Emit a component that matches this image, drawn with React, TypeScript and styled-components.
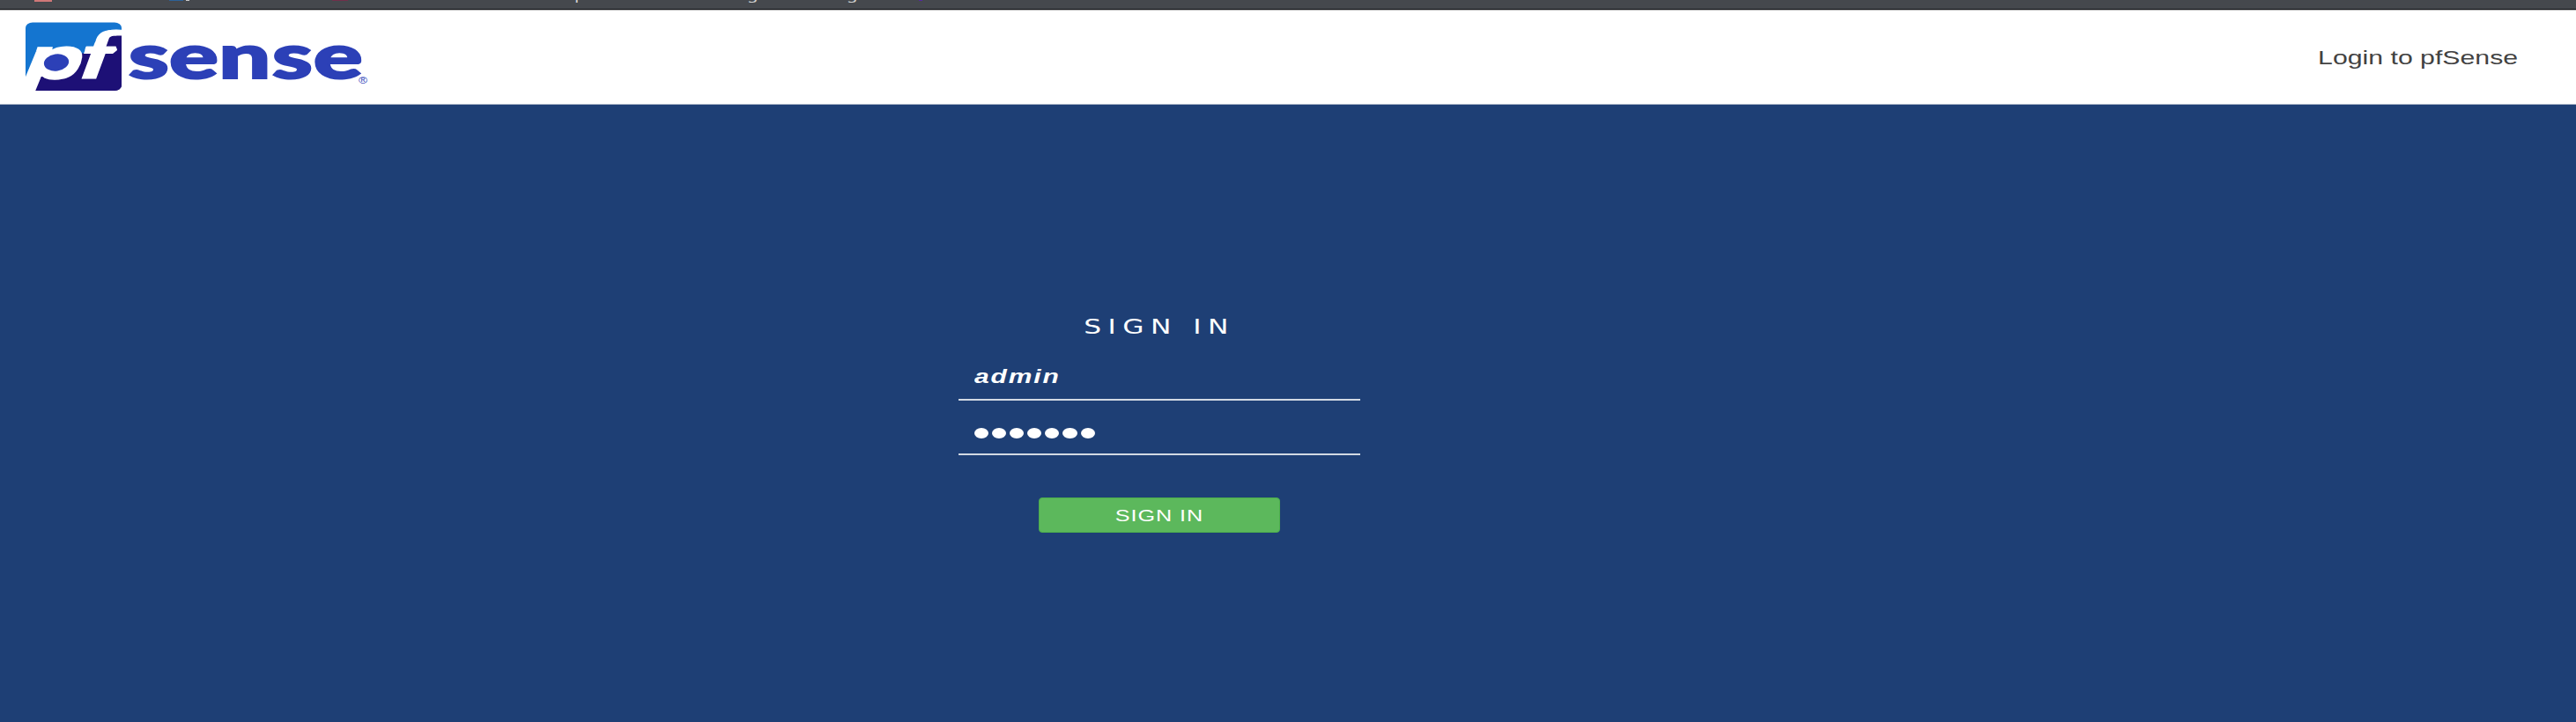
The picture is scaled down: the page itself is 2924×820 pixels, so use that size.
import React from "react";
import styled, { createGlobalStyle } from "styled-components";

const Global = createGlobalStyle`
  html, body { margin: 0; padding: 0; }
  body { background: #1e3f75; font-family: "Liberation Sans", Arial, sans-serif; overflow: hidden; }
  * { box-sizing: border-box; }
`;

const Page = styled.div`
  display: flex;
  flex-direction: column;
  height: 820px;
  background: #1e3f75;
`;

const BookmarkStrip = styled.svg`
  display: block;
  flex: none;
  width: 100%;
  height: 12px;
  background: #45484d;
  border-bottom: 1px solid #b4b4b5;
`;

const Header = styled.header`
  display: flex;
  flex: none;
  justify-content: space-between;
  height: 107px;
  padding: 0 66px 0 29px;
  background: #fff;
  border-bottom: 1px solid #a3afc3;
`;

const Logo = styled.svg`
  display: block;
  margin-top: 12px;
  width: 392px;
  height: 84px;
  overflow: visible;
`;

const WideText = styled.span<{ $origin?: string; $scale?: number }>`
  display: inline-block;
  white-space: nowrap;
  transform: scaleX(${(p) => p.$scale ?? 1.36});
  transform-origin: ${(p) => p.$origin ?? "center"} center;
`;

const LoginTitle = styled.div`
  margin-top: 41px;
  font-size: 22px;
  line-height: 25px;
  color: #424242;
`;

const Form = styled.form`
  display: flex;
  flex-direction: column;
  align-items: center;
  width: 456px;
  margin: 234px 0 0 1088px;
  color: #fff;
`;

const Heading = styled.h1`
  margin: 0;
  font-family: "DejaVu Sans", sans-serif;
  font-size: 23px;
  font-weight: 400;
  line-height: 36px;
  letter-spacing: 5.5px;
`;

const Field = styled.div<{ $height: number }>`
  display: flex;
  align-items: center;
  width: 100%;
  height: ${(p) => p.$height}px;
  padding: 14px 18px 0;
  border-bottom: 2px solid #d2d9e3;
`;

const UserName = styled.span`
  font-size: 22px;
  font-weight: 700;
  font-style: italic;
  letter-spacing: 1.4px;
`;

const Dots = styled.div`
  display: flex;
  gap: 4px;
`;

const Dot = styled.i`
  width: 16.1px;
  height: 12px;
  border-radius: 50%;
  background: #fff;
`;

const SubmitButton = styled.button`
  width: 274px;
  height: 40px;
  margin: 48px 0 0;
  padding: 1px 0 0;
  border: 1px solid #4cae4c;
  border-radius: 4px;
  background: #5cb85c;
  color: #fff;
  font-family: inherit;
  font-size: 18.5px;
  letter-spacing: 0.7px;
`;

function PfSenseLogo() {
  return (
    <Logo viewBox="29 24 392 84" role="img" aria-label="pfSense">
      <clipPath id="badge">
        <rect x="29" y="25.5" width="109" height="77.5" rx="8" ry="6" />
      </clipPath>
      <g clipPath="url(#badge)">
        <path d="M29 25H138V60L60 88H29Z" fill="#1475d0" />
        <path d="M39.7 103L46 85.5L64 85L84 78L92 61L115 56L128 38H138V103Z" fill="#1d1076" />
        <g fill="#fff" stroke="#fff" fontFamily="'Liberation Sans', Arial, sans-serif" fontWeight="700" fontStyle="italic">
          <text transform="translate(28 89) skewX(-6) scale(1.6 1)" fontSize="66" strokeWidth="2">p</text>
          <text transform="translate(89.5 88.5) skewX(-5) scale(1.45 1)" fontSize="76" strokeWidth="1">f</text>
        </g>
        <path d="M94 46H108.5L106 52.700H94Z" fill="#1475d0" />
        <path d="M124 43C126 40.500 131 40.500 138 40.500V103H125V61H129L133 57L131.5 52.700H120.500Z" fill="#1d1076" />
        <path d="M98 52.700H131.5L133 57L128 61H95Z" fill="#fff" />
        <ellipse cx="64" cy="71" rx="17" ry="12.5" transform="rotate(-8 64 71)" fill="#fff" />
        <ellipse cx="64" cy="71" rx="14.200" ry="9.600" transform="rotate(-8 64 71)" fill="#2c40b7" />
      </g>
      <g fill="#2c40b7" fontFamily="Lato, sans-serif" fontWeight="900">
        <text transform="translate(145 89) scale(1.47 1)" x="0.5 31.9 70.3 111.4 143.3" fontSize="71" stroke="#2c40b7" strokeWidth="2">sense</text>
        <text transform="translate(407 94.5) scale(1.36 1)" fontSize="10" fontWeight="400" fontFamily="Liberation Sans, sans-serif">®</text>
      </g>
    </Logo>
  );
}

export default function App() {
  return (
    <Page>
      <Global />
      <BookmarkStrip viewBox="0 0 2924 11" preserveAspectRatio="none">
        <rect x="39" width="20" height="2" fill="#d07878" />
        <rect x="192" width="16" height="1" fill="#2d6298" />
        <rect x="211" width="4" height="1" fill="#ccc" />
        <rect x="377" width="18" height="1" fill="#71304b" />
        <g fill="#d0d0d0" fontFamily="Noto Sans, sans-serif" fontSize="15">
          <text transform="translate(652 -1) scale(1.36 1)">p</text>
          <text transform="translate(848 -1) scale(1.36 1)">g</text>
          <text transform="translate(961 -1) scale(1.36 1)">g</text>
        </g>
        <rect x="1043" width="4" height="1" fill="#5329a0" />
        <rect y="10" width="2924" height="1" fill="#111216" />
      </BookmarkStrip>
      <Header>
        <PfSenseLogo />
        <LoginTitle>
          <WideText $origin="right" $scale={1.375}>Login to pfSense</WideText>
        </LoginTitle>
      </Header>
      <Form onSubmit={(e) => e.preventDefault()}>
        <Heading>
          <WideText>SIGN IN</WideText>
        </Heading>
        <Field $height={66}>
          <UserName>
            <WideText $origin="left">admin</WideText>
          </UserName>
        </Field>
        <Field $height={62}>
          <Dots>
            {Array.from({ length: 7 }, (_, i) => (
              <Dot key={i} />
            ))}
          </Dots>
        </Field>
        <SubmitButton type="submit">
          <WideText>SIGN IN</WideText>
        </SubmitButton>
      </Form>
    </Page>
  );
}
